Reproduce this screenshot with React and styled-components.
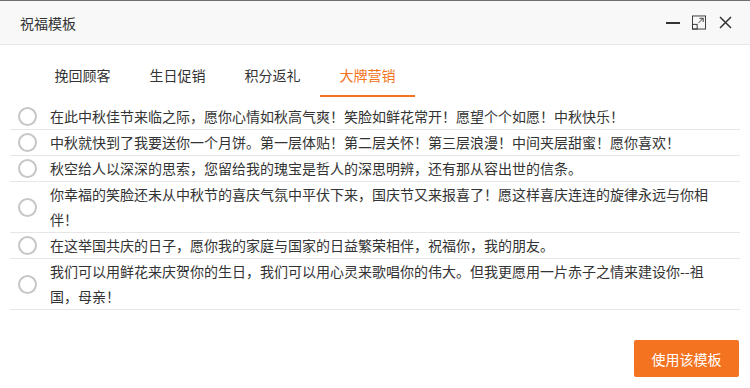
import React, { useState } from 'react';
import styled, { createGlobalStyle } from 'styled-components';

const GlobalStyle = createGlobalStyle`
  html, body {
    margin: 0;
    padding: 0;
    background: #ffffff;
  }
  body {
    font-family: "Microsoft YaHei", "Noto Sans CJK SC", "Noto Sans", sans-serif;
    color: #333333;
  }
`;

const tabs = ['挽回顾客', '生日促销', '积分返礼', '大牌营销'];

const messages = [
  '在此中秋佳节来临之际，愿你心情如秋高气爽！笑脸如鲜花常开！愿望个个如愿！中秋快乐！',
  '中秋就快到了我要送你一个月饼。第一层体贴！第二层关怀！第三层浪漫！中间夹层甜蜜！愿你喜欢！',
  '秋空给人以深深的思索，您留给我的瑰宝是哲人的深思明辨，还有那从容出世的信条。',
  '你幸福的笑脸还未从中秋节的喜庆气氛中平伏下来，国庆节又来报喜了！愿这样喜庆连连的旋律永远与你相伴！',
  '在这举国共庆的日子，愿你我的家庭与国家的日益繁荣相伴，祝福你，我的朋友。',
  '我们可以用鲜花来庆贺你的生日，我们可以用心灵来歌唱你的伟大。但我更愿用一片赤子之情来建设你--祖国，母亲！',
];

const Dialog = styled.div`
  width: 750px;
  height: 388px;
  box-sizing: border-box;
  border-top: 1px solid #6f6f6f;
  display: flex;
  flex-direction: column;
  background: #ffffff;
`;

const Header = styled.div`
  height: 43px;
  flex: none;
  background: #f8f8f8;
  border-bottom: 1px solid #e8e8e8;
  display: flex;
  align-items: center;
  padding: 0 18px 0 20px;
`;

const Title = styled.div`
  flex: 1;
  font-size: 14px;
  color: #333333;
  line-height: 20px;
  margin-top: 1px;
`;

const Controls = styled.div`
  display: flex;
  align-items: center;
  gap: 12px;
`;

const IconButton = styled.button`
  width: 14px;
  height: 14px;
  padding: 0;
  border: none;
  background: none;
  display: flex;
  align-items: center;
  justify-content: center;
  cursor: pointer;
  color: #333333;

  svg {
    display: block;
  }
`;

const TabBar = styled.div`
  display: flex;
  margin-top: 8px;
  padding-left: 35px;
  flex: none;
`;

const Tab = styled.div`
  width: 95px;
  height: 42px;
  line-height: 44px;
  text-align: center;
  font-size: 14px;
  cursor: pointer;
  color: ${p => (p.$active ? '#f47321' : '#333333')};
  border-bottom: 2px solid ${p => (p.$active ? '#f47321' : 'transparent')};
`;

const List = styled.div`
  margin: 7px 10px 0;
  flex: none;
`;

const Row = styled.label`
  display: flex;
  align-items: center;
  border-bottom: 1px solid #e6e6e6;
  cursor: pointer;
`;

const Radio = styled.span`
  width: 40px;
  flex: none;
  display: flex;
  padding-left: 8px;
  box-sizing: border-box;

  &::before {
    content: '';
    width: 15px;
    height: 15px;
    border-radius: 50%;
    border: 2px solid ${p => (p.$checked ? '#f47321' : '#c6c6c6')};
    box-sizing: content-box;
    background: ${p => (p.$checked ? 'radial-gradient(#f47321 0 4px, #fff 4.5px)' : '#ffffff')};
  }
`;

const Text = styled.div`
  flex: 1;
  padding-right: 28px;
  font-size: 14px;
  line-height: 25px;
  color: #333333;
`;

const Footer = styled.div`
  flex: 1;
  display: flex;
  justify-content: flex-end;
  align-items: flex-end;
  padding: 0 11px 11px 0;
`;

const PrimaryButton = styled.button`
  width: 105px;
  height: 37px;
  border: none;
  border-radius: 2px;
  background: #f47321;
  color: #ffffff;
  font-family: inherit;
  font-size: 14px;
  cursor: pointer;
`;

const MinimizeIcon = () => (
  <svg width="14" height="14" viewBox="0 0 14 14">
    <rect x="0" y="6" width="14" height="2" fill="currentColor" />
  </svg>
);

const RestoreIcon = () => (
  <svg width="15" height="15" viewBox="0 0 15 15" fill="none" stroke="currentColor" strokeWidth="1">
    <rect x="0.5" y="0.5" width="14" height="14" />
    <rect x="0.5" y="9.5" width="5" height="5" />
    <path d="M7 8 L12 3 M8 3 H12 V7" />
  </svg>
);

const CloseIcon = () => (
  <svg width="13" height="13" viewBox="0 0 13 13" stroke="currentColor" strokeWidth="1.5">
    <path d="M1 1 L12 12 M12 1 L1 12" />
  </svg>
);

const App = () => {
  const [active, setActive] = useState(3);
  const [checked, setChecked] = useState(-1);

  return (
    <>
      <GlobalStyle />
      <Dialog>
        <Header>
          <Title>祝福模板</Title>
          <Controls>
            <IconButton aria-label="minimize"><MinimizeIcon /></IconButton>
            <IconButton aria-label="maximize"><RestoreIcon /></IconButton>
            <IconButton aria-label="close"><CloseIcon /></IconButton>
          </Controls>
        </Header>

        <TabBar>
          {tabs.map((t, i) => (
            <Tab key={t} $active={i === active} onClick={() => setActive(i)}>
              {t}
            </Tab>
          ))}
        </TabBar>

        <List>
          {messages.map((m, i) => (
            <Row key={i} onClick={() => setChecked(i)}>
              <Radio $checked={i === checked} />
              <Text>{m}</Text>
            </Row>
          ))}
        </List>

        <Footer>
          <PrimaryButton>使用该模板</PrimaryButton>
        </Footer>
      </Dialog>
    </>
  );
};

export default App;
